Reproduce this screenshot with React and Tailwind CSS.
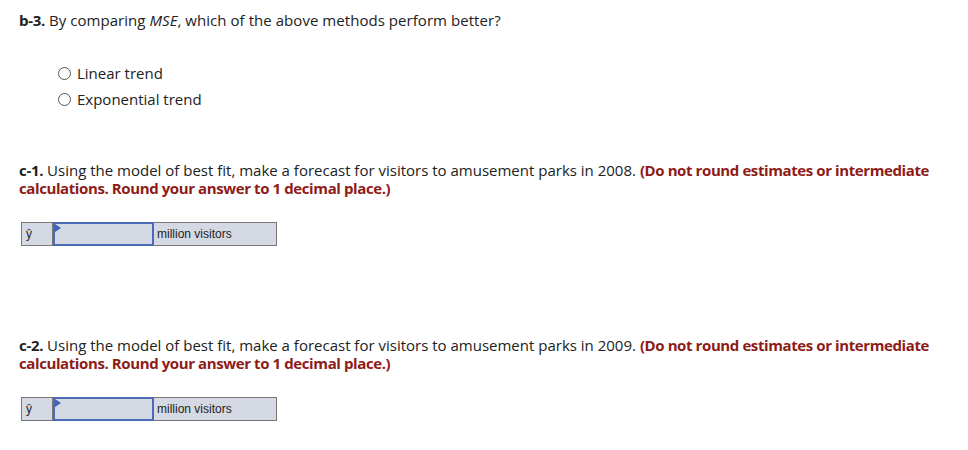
const font = { fontFamily: "'Open Sans', 'Liberation Sans', sans-serif" };

function AnswerRow() {
  return (
    <div className="flex h-[24px] w-[256px] border border-[#777] bg-[#d5d9e3] font-['Liberation_Sans',Arial,sans-serif] text-[12px] text-[#222]">
      <div className="flex w-[31px] items-center pl-[4px] border-r border-[#777]">ŷ</div>
      <div className="relative w-[101px] border-2 border-[#4a6bb5] -my-px">
        <span className="absolute left-0 top-0 h-0 w-0 border-y-[4px] border-l-[6px] border-y-transparent border-l-[#3f62b8]" />
      </div>
      <div className="flex flex-1 items-center pl-[3px]">million visitors</div>
    </div>
  );
}

function Radio({ label }) {
  return (
    <label className="flex items-center gap-[6px] h-[26px]">
      <span className="h-[13px] w-[13px] rounded-full border border-[#555] bg-white" />
      <span>{label}</span>
    </label>
  );
}

function Part({ tag, year }) {
  return (
    <div>
      <p className="leading-[18px]">
        <b className="font-bold tracking-[-0.3px]">{tag}</b> Using the model of best fit, make a forecast for visitors to amusement parks in {year}.{" "}
        <b className="font-bold tracking-[-0.4px] text-[#8e1b17]">(Do not round estimates or intermediate calculations. Round your answer to 1 decimal place.)</b>
      </p>
      <div className="mt-[25px] pl-[2px]">
        <AnswerRow />
      </div>
    </div>
  );
}

export default function App() {
  return (
    <div className="bg-white w-[968px] h-[450px] px-[19px] pt-[11px] text-[15px] text-[#222]" style={font}>
      <p className="leading-[18px] tracking-[0.05px]">
        <b className="font-bold tracking-[-0.3px]">b-3.</b> By comparing <i>MSE</i>, which of the above methods perform better?
      </p>
      <div className="mt-[31px] pl-[39px]">
        <Radio label="Linear trend" />
        <Radio label="Exponential trend" />
      </div>
      <div className="mt-[49px]">
        <Part tag="c-1." year="2008" />
      </div>
      <div className="mt-[90px]">
        <Part tag="c-2." year="2009" />
      </div>
    </div>
  );
}
